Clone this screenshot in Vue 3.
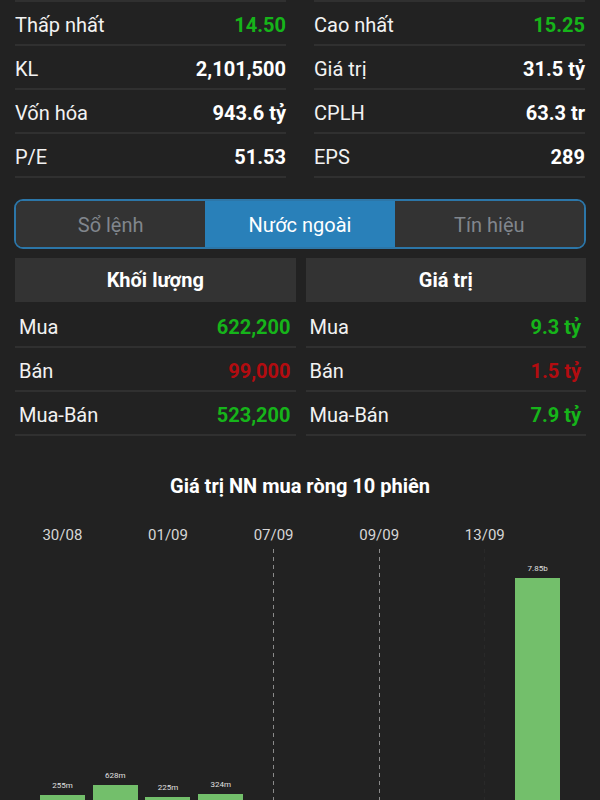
<script setup>
import { ref } from 'vue';

const stats = [
    [
        { label: 'Thấp nhất', value: '14.50', tone: 'up' },
        { label: 'KL', value: '2,101,500' },
        { label: 'Vốn hóa', value: '943.6 tỷ' },
        { label: 'P/E', value: '51.53' }
    ],
    [
        { label: 'Cao nhất', value: '15.25', tone: 'up' },
        { label: 'Giá trị', value: '31.5 tỷ' },
        { label: 'CPLH', value: '63.3 tr' },
        { label: 'EPS', value: '289' }
    ]
];

const tabs = ['Sổ lệnh', 'Nước ngoài', 'Tín hiệu'];
const activeTab = ref(1);

const foreign = [
    {
        title: 'Khối lượng',
        rows: [
            { label: 'Mua', value: '622,200', tone: 'up' },
            { label: 'Bán', value: '99,000', tone: 'down' },
            { label: 'Mua-Bán', value: '523,200', tone: 'up' }
        ]
    },
    {
        title: 'Giá trị',
        rows: [
            { label: 'Mua', value: '9.3 tỷ', tone: 'up' },
            { label: 'Bán', value: '1.5 tỷ', tone: 'down' },
            { label: 'Mua-Bán', value: '7.9 tỷ', tone: 'up' }
        ]
    }
];

// height: phần cột nằm trên trục, tính bằng px
const sessions = [
    { date: '30/08', text: '255m', height: 5 },
    { text: '628m', height: 15 },
    { date: '01/09', text: '225m', height: 3 },
    { text: '324m', height: 6 },
    { date: '07/09', grid: 'strong' },
    {},
    { date: '09/09', grid: 'strong' },
    {},
    { date: '13/09', grid: 'faint' },
    { text: '7.85b', height: 222 }
];
</script>

<template>
    <main class="page">
        <section class="stats">
            <table v-for="(group, i) in stats" :key="i" class="data-table">
                <tbody>
                    <tr v-for="row in group" :key="row.label">
                        <th scope="row">{{ row.label }}</th>
                        <td :class="row.tone">{{ row.value }}</td>
                    </tr>
                </tbody>
            </table>
        </section>

        <nav class="tabs">
            <button v-for="(tab, i) in tabs" :key="tab" type="button" class="tab" :class="{ active: activeTab === i }"
                @click="activeTab = i">
                {{ tab }}
            </button>
        </nav>

        <section class="foreign">
            <table v-for="block in foreign" :key="block.title" class="data-table padded">
                <thead>
                    <tr>
                        <th scope="col" colspan="2">{{ block.title }}</th>
                    </tr>
                </thead>
                <tbody>
                    <tr v-for="row in block.rows" :key="row.label">
                        <th scope="row">{{ row.label }}</th>
                        <td :class="row.tone">{{ row.value }}</td>
                    </tr>
                </tbody>
            </table>
        </section>

        <section class="chart">
            <h2>Giá trị NN mua ròng 10 phiên</h2>
            <div class="plot">
                <div v-for="(s, i) in sessions" :key="i" class="session">
                    <span class="date">{{ s.date }}</span>
                    <div class="lane" :class="s.grid">
                        <span v-if="s.text" class="amount">{{ s.text }}</span>
                        <div v-if="s.height" class="bar" :style="{ height: s.height + 'px' }"></div>
                    </div>
                </div>
            </div>
        </section>
    </main>
</template>

<style>
body {
    margin: 0;
    background: #222222;
}
</style>

<style scoped>
.page {
    box-sizing: border-box;
    display: flex;
    flex-direction: column;
    min-height: 100vh;
    background: #222222;
    color: #f2f2f2;
    font-family: Roboto, 'Noto Sans', sans-serif;
    font-size: 20px;
    line-height: 24px;
}

.stats {
    display: grid;
    grid-template-columns: 1fr 1fr;
    gap: 28px;
    padding: 0 15px;
}

.data-table {
    width: 100%;
    border-collapse: separate;
    border-spacing: 0;
}

.stats .data-table {
    border-top: 2px solid #303030;
}

.data-table tbody th,
.data-table td {
    box-sizing: border-box;
    height: 44px;
    padding: 3px 0 0;
    border-bottom: 2px solid #303030;
    vertical-align: middle;
}

.data-table tbody th {
    font-weight: 400;
    text-align: left;
}

.data-table td {
    color: #ffffff;
    font-weight: 700;
    text-align: right;
}

.data-table td.up {
    color: #16b41a;
}

.data-table td.down {
    color: #b30c10;
}

.tabs {
    display: grid;
    grid-template-columns: repeat(3, 1fr);
    height: 46px;
    margin: 21px 14px 0;
    border: 2px solid #2c76a8;
    border-radius: 9px;
    overflow: hidden;
}

.tab {
    padding: 2px 0 0;
    border: 0;
    background: #333333;
    color: #81868d;
    font: inherit;
    cursor: pointer;
}

.tab.active {
    background: #2980b9;
    color: #ffffff;
}

.foreign {
    display: grid;
    grid-template-columns: 1fr 1fr;
    gap: 10px;
    padding: 9px 14px 0 15px;
}

.data-table thead th {
    height: 44px;
    padding: 0;
    border-bottom: 2px solid #222222;
    background: #333333;
    color: #ffffff;
    font-weight: 700;
}

.padded tbody th {
    padding-left: 4px;
}

.padded td {
    padding-right: 5px;
}

.chart {
    flex: 1;
    display: flex;
    flex-direction: column;
    margin-top: 38px;
}

.chart h2 {
    margin: 0;
    color: #ffffff;
    font-size: 20px;
    font-weight: 700;
    line-height: 24px;
    text-align: center;
}

.plot {
    flex: 1;
    display: grid;
    grid-template-columns: repeat(10, 1fr);
    margin-top: 27px;
    padding: 0 36px;
}

.session {
    display: flex;
    flex-direction: column;
    align-items: center;
}

.date {
    height: 20px;
    color: #d6d6d6;
    font-size: 15px;
    line-height: 20px;
}

.lane {
    flex: 1;
    display: flex;
    flex-direction: column;
    justify-content: flex-end;
    align-items: center;
    width: 100%;
    margin-top: 4px;
}

.lane.strong {
    background: repeating-linear-gradient(#8a8a8a 0 4px, transparent 4px 8px) center / 1px 100% no-repeat;
}

.lane.faint {
    background: repeating-linear-gradient(#292929 0 4px, transparent 4px 8px) center / 1px 100% no-repeat;
}

.amount {
    color: #e0e0e0;
    font-size: 8px;
    line-height: 8px;
    margin-bottom: 5px;
}

.bar {
    width: 45px;
    background: #73bf6b;
}
</style>
